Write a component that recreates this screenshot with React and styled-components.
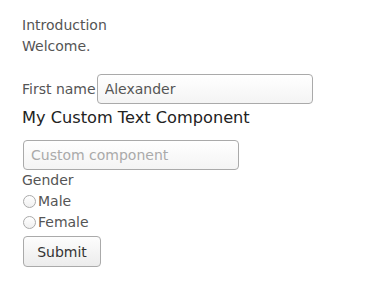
import React from "react";
import styled, { createGlobalStyle } from "styled-components";

const Global = createGlobalStyle`
  body {
    margin: 0;
    background: #fff;
    font-family: "DejaVu Sans", sans-serif;
  }
`;

const Page = styled.form`
  padding: 15px 22px;
  display: flex;
  flex-direction: column;
  align-items: flex-start;
  color: #555;
  font-size: 14px;
  line-height: 21px;
`;

const Text = styled.div`
  color: #555;
`;

const Spacer = styled.div`
  height: 17px;
`;

const Row = styled.div`
  display: flex;
  align-items: center;
  height: 30px;
`;

const Label = styled.label`
  color: #555;
`;

const Input = styled.input`
  box-sizing: border-box;
  width: 216px;
  height: 30px;
  margin: 0 0 0 1px;
  padding: 0 7px;
  border: 1px solid #aaa;
  border-radius: 4px;
  background: linear-gradient(#fff, #f4f4f4);
  font-family: "DejaVu Sans", sans-serif;
  font-size: 14px;
  color: #555;
  &::placeholder {
    color: #aaa;
  }
`;

const Heading = styled.div`
  font-size: 16.2px;
  line-height: 22px;
  color: #222;
  margin: 3px 0 11px;
`;

const RadioRow = styled.label`
  display: flex;
  align-items: center;
  height: 21px;
`;

const Radio = styled.span`
  box-sizing: border-box;
  width: 13px;
  height: 13px;
  border-radius: 50%;
  border: 1px solid #aaa;
  background: linear-gradient(#fff, #f0f0f0);
  margin: 0 2px 0 1px;
`;

const Button = styled.button`
  box-sizing: border-box;
  margin-top: 3px;
  margin-left: 1px;
  width: 78px;
  height: 31px;
  border: 1px solid #aaa;
  border-radius: 4px;
  background: linear-gradient(#fdfdfd, #ececec);
  font-family: "DejaVu Sans", sans-serif;
  font-size: 14px;
  color: #333;
`;

export default function App() {
  return (
    <>
      <Global />
      <Page onSubmit={(e) => e.preventDefault()}>
        <Text>Introduction</Text>
        <Text>Welcome.</Text>
        <Spacer />
        <Row>
          <Label>First name</Label>
          <Input defaultValue="Alexander" />
        </Row>
        <Heading>My Custom Text Component</Heading>
        <Input placeholder="Custom component" />
        <Text>Gender</Text>
        <RadioRow>
          <Radio />
          Male
        </RadioRow>
        <RadioRow>
          <Radio />
          Female
        </RadioRow>
        <Button type="submit">Submit</Button>
      </Page>
    </>
  );
}
